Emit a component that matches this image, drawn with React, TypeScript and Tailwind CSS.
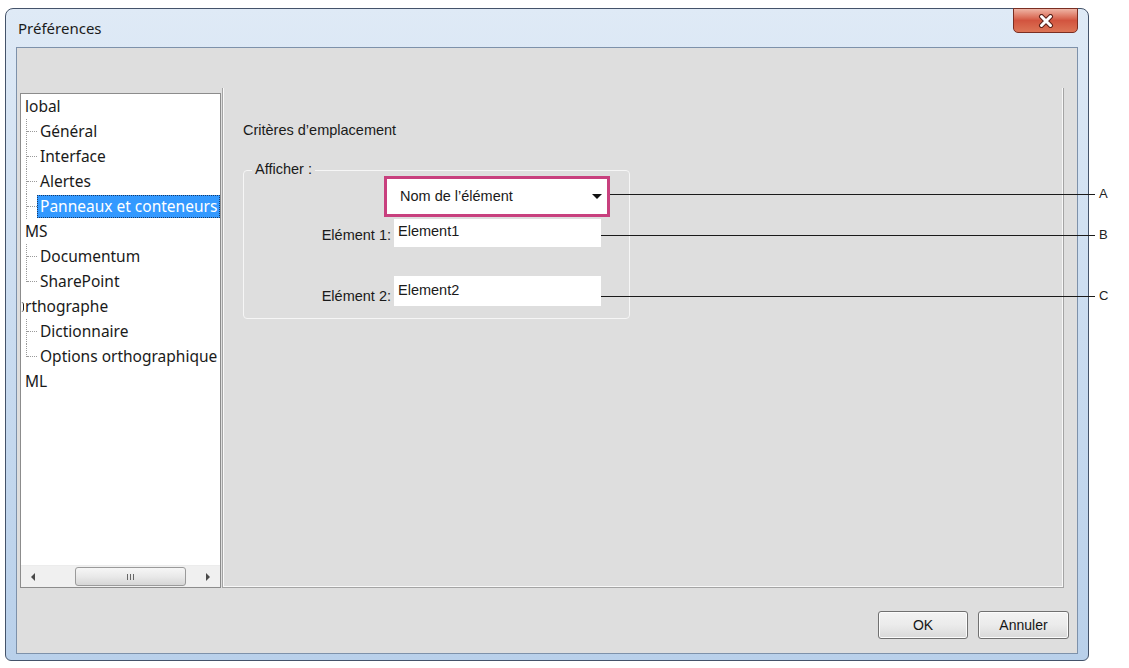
const tree = [
  { label: "lobal", level: 0 },
  { label: "Général", level: 1 },
  { label: "Interface", level: 1 },
  { label: "Alertes", level: 1 },
  { label: "Panneaux et conteneurs", level: 1, selected: true },
  { label: "MS", level: 0 },
  { label: "Documentum", level: 1 },
  { label: "SharePoint", level: 1, last: true },
  { label: "rthographe", level: 0, clipped: true },
  { label: "Dictionnaire", level: 1 },
  { label: "Options orthographique", level: 1, last: true },
  { label: "ML", level: 0 },
];

function TreeRow({ item }: { item: (typeof tree)[number] }) {
  if (item.level === 0) {
    return (
      <div className="relative h-[25px] flex items-center pl-[4px]">
        {item.clipped && (
          <span className="absolute left-0 top-[8px] w-[3px] h-[10px] border-r-[1.5px] border-[#222] rounded-r-full" />
        )}
        <span>{item.label}</span>
      </div>
    );
  }
  return (
    <div className="relative h-[25px] flex items-center">
      {/* tree lines */}
      <span
        className={`absolute left-[5px] top-0 border-l border-dotted border-[#9a9a9a] ${
          item.last ? "h-[13px]" : "h-[25px]"
        }`}
      />
      <span className="absolute left-[6px] top-[12px] w-[10px] border-t border-dotted border-[#9a9a9a]" />
      {item.selected ? (
        <span className="ml-[16px] h-[23px] flex items-center px-[2px] bg-[#3399ff] text-white border border-dotted border-[#1a3a66] whitespace-nowrap">
          {item.label}
        </span>
      ) : (
        <span className="ml-[19px] whitespace-nowrap">{item.label}</span>
      )}
    </div>
  );
}

function Scrollbar() {
  return (
    <div className="h-[22px] bg-[#f0f0f0] flex items-center border-t border-[#ececec]">
      <div className="w-[24px] h-full flex items-center justify-center">
        <span className="border-y-[4px] border-y-transparent border-r-[4px] border-r-[#4a4a4a]" />
      </div>
      <div className="w-[30px]" />
      <div className="w-[111px] h-[19px] rounded-[3px] border border-[#9a9a9a] bg-gradient-to-b from-[#f6f6f6] via-[#e9e9e9] to-[#d6d6d6] flex items-center justify-center gap-[2px]">
        <span className="w-px h-[6px] bg-[#666]" />
        <span className="w-px h-[6px] bg-[#666]" />
        <span className="w-px h-[6px] bg-[#666]" />
      </div>
      <div className="flex-1" />
      <div className="w-[24px] h-full flex items-center justify-center">
        <span className="border-y-[4px] border-y-transparent border-l-[4px] border-l-[#4a4a4a]" />
      </div>
    </div>
  );
}

function WinButton({ children, w }: { children: string; w: string }) {
  return (
    <div
      className={`${w} h-[28px] rounded-[3px] border border-[#707070] bg-gradient-to-b from-[#f3f3f3] via-[#ebebeb] to-[#d9d9d9] shadow-[inset_0_0_0_1px_#fcfcfc] flex items-center justify-center text-[14px] text-[#151515]`}
    >
      {children}
    </div>
  );
}

export default function App() {
  return (
    <div className="relative w-[1129px] h-[668px] bg-white overflow-hidden pt-[8px] pl-[5px] font-['Liberation_Sans',Arial,sans-serif]">
      {/* window */}
      <div className="relative w-[1084px] h-[653px] rounded-t-[8px] rounded-b-[6px] border border-[#44536a] bg-gradient-to-b from-[#dfeaf6] via-[#cadcf0] to-[#b9d0ea] flex flex-col">
        <div className="h-[38px] flex items-center pl-[12px] text-[15px] text-[#1b1b1b] font-['Noto_Sans',sans-serif]">
          Préférences
        </div>

        {/* close button */}
        <div className="absolute top-[-1px] right-[10px] w-[65px] h-[25px] rounded-b-[5px] border border-[#7a2e22] bg-gradient-to-b from-[#eeb4a5] via-[#d2543f] to-[#dc7456] flex items-center justify-center">
          <svg width="16" height="14" viewBox="0 0 16 14">
            <path d="M3.5 2.5 L12.5 11.5 M12.5 2.5 L3.5 11.5" stroke="#5a2018" strokeWidth="5" strokeLinecap="round" />
            <path d="M3.5 2.5 L12.5 11.5 M12.5 2.5 L3.5 11.5" stroke="#ffffff" strokeWidth="3" strokeLinecap="round" />
          </svg>
        </div>

        {/* client area */}
        <div className="mx-[10px] h-[607px] border border-[#7d91aa] bg-[#dedede] flex flex-col">
          <div className="flex items-start pt-[40px] pl-[3px]">
            {/* tree */}
            <div className="mt-[5px] w-[201px] h-[495px] border border-[#8c8c8c] bg-white flex flex-col font-['Noto_Sans',sans-serif] text-[15.5px] text-[#1a1a1a]">
              <div className="flex-1 overflow-hidden">
                {tree.map((item) => (
                  <TreeRow key={item.label} item={item} />
                ))}
              </div>
              <Scrollbar />
            </div>

            {/* right panel */}
            <div className="ml-[1px] w-[842px] h-[500px] border-x border-b border-[#a4a4a4]">
              <div className="h-full border-x border-b border-[#f8f8f8] pt-[34px] pl-[19px] text-[14.5px] leading-[17px] text-[#1a1a1a]">
                <div>Critères d’emplacement</div>

                <div className="relative mt-[31px] w-[387px] h-[149px] border border-[#f6f6f6] rounded-[4px]">
                  <span className="absolute left-[8px] top-[-10px] px-[3px] bg-[#dedede]">Afficher :</span>

                  <div className="ml-[140px] mt-[5px] w-[226px] h-[41px] border-[3px] border-[#c8407e] bg-white flex items-center justify-between pl-[13px] pr-[5px]">
                    <span>Nom de l’élément</span>
                    <span className="border-x-[5px] border-x-transparent border-t-[5px] border-t-[#111]" />
                  </div>

                  <div className="mt-[2px] flex">
                    <div className="w-[150px] text-right pr-[3px] mt-[8px]">Elément 1:</div>
                    <div className="w-[207px] h-[28px] bg-white pl-[4px] pt-[4px]">Element1</div>
                  </div>

                  <div className="mt-[29px] flex">
                    <div className="w-[150px] text-right pr-[3px] mt-[12px]">Elément 2:</div>
                    <div className="w-[207px] h-[30px] bg-white pl-[4px] pt-[6px]">Element2</div>
                  </div>
                </div>
              </div>
            </div>
          </div>

          <div className="mt-[23px] flex justify-end gap-[10px] pr-[8px]">
            <WinButton w="w-[90px]">OK</WinButton>
            <WinButton w="w-[91px]">Annuler</WinButton>
          </div>
        </div>
      </div>

      {/* callouts */}
      <div className="absolute left-[610px] top-[194px] w-[485px] h-px bg-[#1a1a1a]" />
      <div className="absolute left-[601px] top-[235px] w-[494px] h-px bg-[#1a1a1a]" />
      <div className="absolute left-[601px] top-[296px] w-[494px] h-px bg-[#1a1a1a]" />
      <span className="absolute left-[1099px] top-[186px] text-[13px] leading-[15px] text-[#222]">A</span>
      <span className="absolute left-[1099px] top-[227px] text-[13px] leading-[15px] text-[#222]">B</span>
      <span className="absolute left-[1099px] top-[288px] text-[13px] leading-[15px] text-[#222]">C</span>
    </div>
  );
}
